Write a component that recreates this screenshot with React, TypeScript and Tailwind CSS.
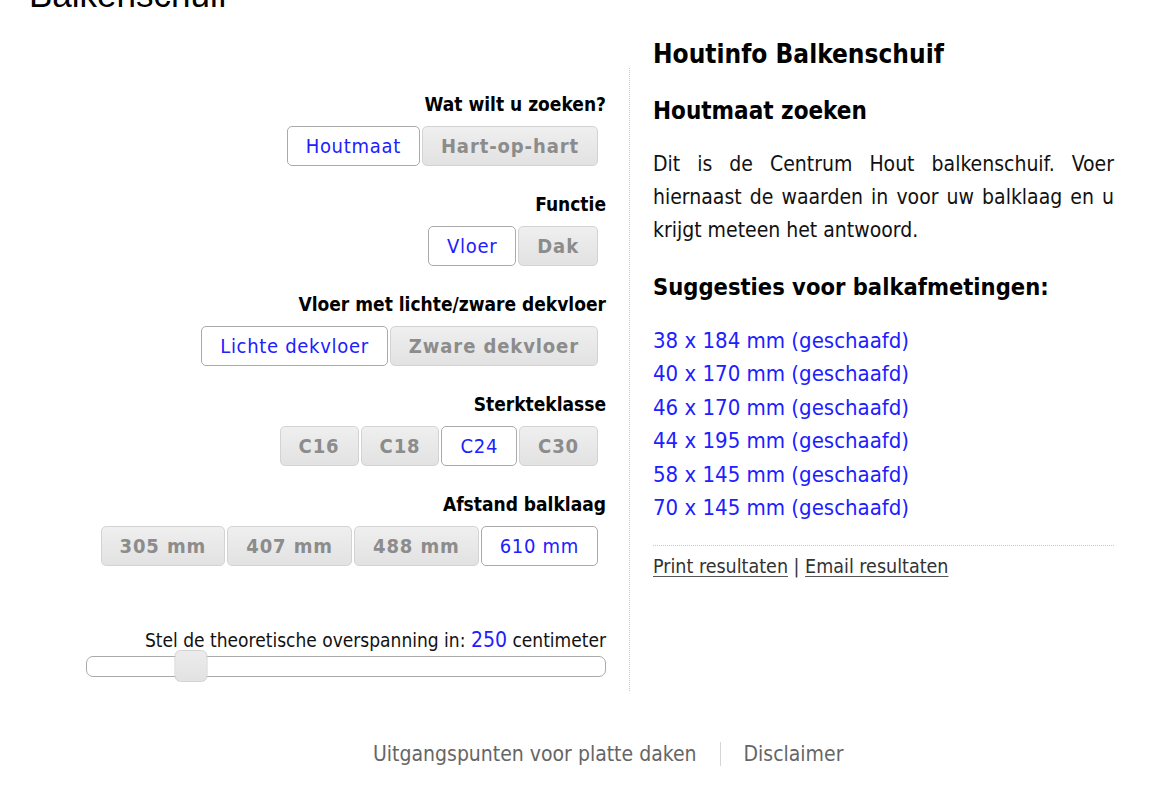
import { useState } from 'react';

type Option = { label: string; value: string };

const font = "font-['DejaVu_Sans_Condensed','Tahoma','DejaVu_Sans',sans-serif]";

function ButtonSet({
  options,
  value,
  onChange,
}: {
  options: Option[];
  value: string;
  onChange: (v: string) => void;
}) {
  return (
    <div className="mt-[10px] flex justify-end gap-[2px] pr-[8px]">
      {options.map((o) => {
        const active = o.value === value;
        return (
          <button
            key={o.value}
            type="button"
            onClick={() => onChange(o.value)}
            className={[
              'h-[40px] rounded-[5px] border px-[18px] text-[20px] leading-none',
              active
                ? 'border-[#aaaaaa] bg-white font-normal tracking-[0.7px] text-[#2020ff]'
                : 'border-[#d3d3d3] bg-gradient-to-b from-[#efefef] to-[#e2e2e2] font-bold tracking-[0.9px] text-[#8c8c8c]',
            ].join(' ')}
          >
            {o.label}
          </button>
        );
      })}
    </div>
  );
}

function Group({ title, children }: { title: string; children: React.ReactNode }) {
  return (
    <div className="mb-[26px]">
      <div className="text-right text-[19px] font-bold leading-[24px] text-black">{title}</div>
      {children}
    </div>
  );
}

const suggestions = [
  '38 x 184 mm (geschaafd)',
  '40 x 170 mm (geschaafd)',
  '46 x 170 mm (geschaafd)',
  '44 x 195 mm (geschaafd)',
  '58 x 145 mm (geschaafd)',
  '70 x 145 mm (geschaafd)',
];

export default function App() {
  const [zoek, setZoek] = useState('houtmaat');
  const [functie, setFunctie] = useState('vloer');
  const [dek, setDek] = useState('licht');
  const [klasse, setKlasse] = useState('C24');
  const [afstand, setAfstand] = useState('610');
  const [span, setSpan] = useState(250);

  // slider range 100..850 cm
  const pct = ((span - 100) / 750) * 100;

  return (
    <div className={`min-h-[793px] overflow-hidden bg-white ${font}`}>
      <h1 className="-mt-[25px] pl-[29px] font-['Liberation_Sans',Arial,sans-serif] text-[35px] leading-[40px] text-black">
        Balkenschuif
      </h1>

      <div className="mt-[23px] flex">
        {/* Left: form */}
        <div className="mt-[30px] w-[630px] border-r border-dotted border-[#c8c8c8] pr-[23px] pb-[14px] pt-[24px]">
          <Group title="Wat wilt u zoeken?">
            <ButtonSet
              value={zoek}
              onChange={setZoek}
              options={[
                { label: 'Houtmaat', value: 'houtmaat' },
                { label: 'Hart-op-hart', value: 'hoh' },
              ]}
            />
          </Group>
          <Group title="Functie">
            <ButtonSet
              value={functie}
              onChange={setFunctie}
              options={[
                { label: 'Vloer', value: 'vloer' },
                { label: 'Dak', value: 'dak' },
              ]}
            />
          </Group>
          <Group title="Vloer met lichte/zware dekvloer">
            <ButtonSet
              value={dek}
              onChange={setDek}
              options={[
                { label: 'Lichte dekvloer', value: 'licht' },
                { label: 'Zware dekvloer', value: 'zwaar' },
              ]}
            />
          </Group>
          <Group title="Sterkteklasse">
            <ButtonSet
              value={klasse}
              onChange={setKlasse}
              options={['C16', 'C18', 'C24', 'C30'].map((c) => ({ label: c, value: c }))}
            />
          </Group>
          <Group title="Afstand balklaag">
            <ButtonSet
              value={afstand}
              onChange={setAfstand}
              options={['305', '407', '488', '610'].map((c) => ({ label: `${c} mm`, value: c }))}
            />
          </Group>

          <div className="mt-[62px] text-right text-[19px] leading-[24px] text-[#111]">
            Stel de theoretische overspanning in: <span className="text-[21px] text-[#2020ff]">{span}</span> centimeter
          </div>
          <div className="relative ml-[86px] mt-[4px] h-[21px] rounded-[7px] border border-[#aaaaaa] bg-white">
            <input
              type="range"
              min={100}
              max={850}
              value={span}
              onChange={(e) => setSpan(Number(e.target.value))}
              className="absolute inset-0 h-full w-full cursor-pointer opacity-0"
            />
            <div
              className="pointer-events-none absolute -top-[7px] h-[32px] w-[33px] -translate-x-1/2 rounded-[6px] border border-[#d3d3d3] bg-gradient-to-b from-[#ececec] to-[#e2e2e2]"
              style={{ left: `${pct}%` }}
            />
          </div>
        </div>

        {/* Right: info */}
        <div className="w-[484px] pl-[23px]">
          <h2 className="text-[26px] font-bold leading-[32px] text-black">Houtinfo Balkenschuif</h2>
          <h3 className="mt-[26px] text-[24px] font-bold leading-[30px] text-black">Houtmaat zoeken</h3>
          <div className="mt-[22px] text-[21px] leading-[33px] text-[#111]">
            <div className="text-justify [text-align-last:justify]">Dit is de Centrum Hout balkenschuif. Voer</div>
            <div className="text-justify [text-align-last:justify]">hiernaast de waarden in voor uw balklaag en u</div>
            <div>krijgt meteen het antwoord.</div>
          </div>
          <h3 className="mt-[25px] text-[23.5px] font-bold leading-[30px] text-black">Suggesties voor balkafmetingen:</h3>
          <ul className="mt-[22px] text-[22px] leading-[33.4px] text-[#2020ff]">
            {suggestions.map((s) => (
              <li key={s}>{s}</li>
            ))}
          </ul>
          <div className="mt-[21px] border-t border-dotted border-[#c8c8c8] pt-[9px] text-[19.5px] leading-[24px] text-[#333]">
            <a href="#" className="underline decoration-[#555] underline-offset-[3px]">Print resultaten</a>
            {' | '}
            <a href="#" className="underline decoration-[#555] underline-offset-[3px]">Email resultaten</a>
          </div>
        </div>
      </div>

      <div className="mt-[50px] flex items-center pl-[373px] text-[21px] leading-[26px] text-[#666]">
        <a href="#">Uitgangspunten voor platte daken</a>
        <span className="mx-[23px] h-[24px] w-px bg-[#d5d5d5]" />
        <a href="#">Disclaimer</a>
      </div>
    </div>
  );
}
